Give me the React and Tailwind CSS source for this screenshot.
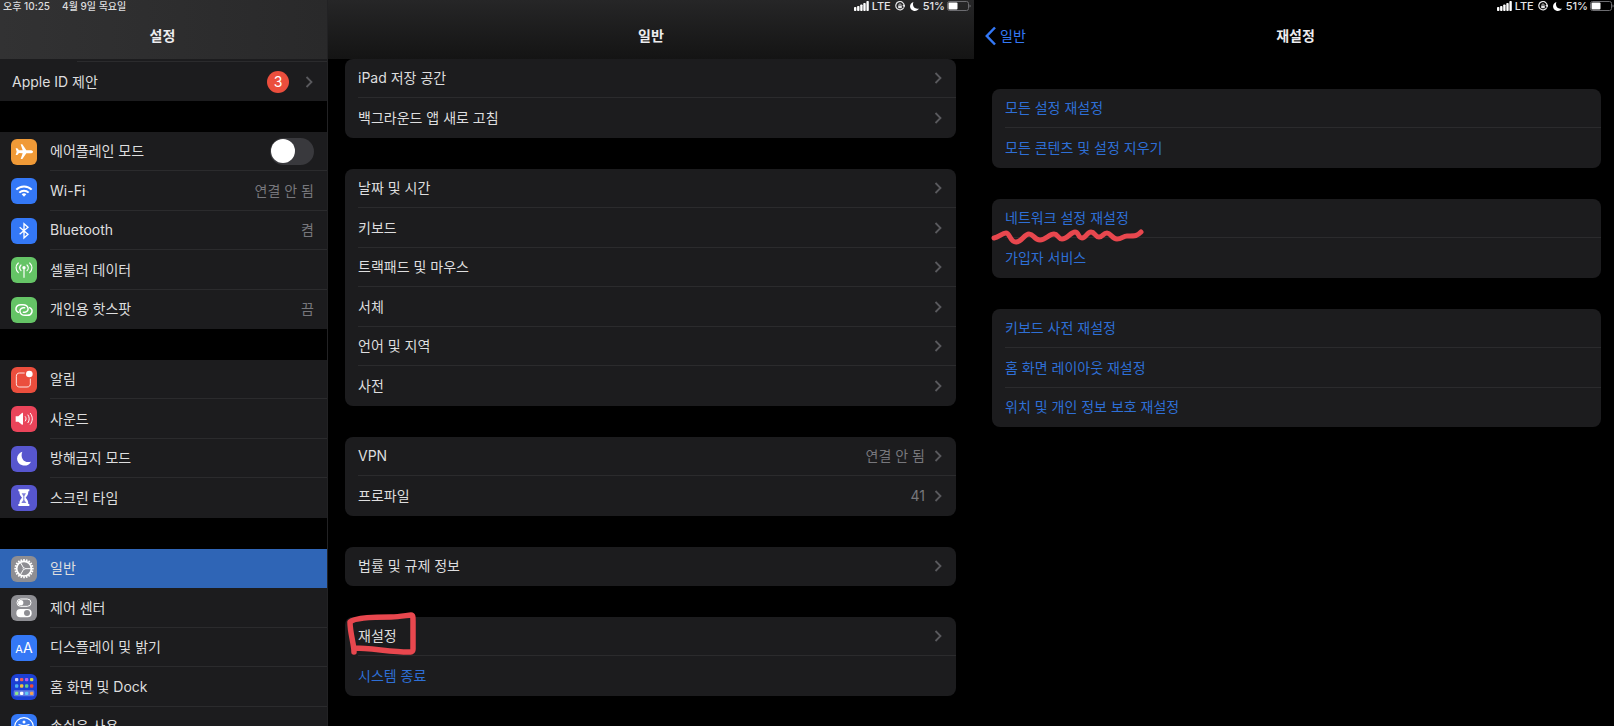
import { useState } from 'react';
import clsx from 'clsx';

const networkRows = [
    { icon: 'airplane', color: 'bg-[#f09a37]', label: '에어플레인 모드', toggle: true },
    { icon: 'wifi', color: 'bg-[#3478f6]', label: 'Wi-Fi', value: '연결 안 됨' },
    { icon: 'bluetooth', color: 'bg-[#3478f6]', label: 'Bluetooth', value: '켬' },
    { icon: 'cellular', color: 'bg-[#65c466]', label: '셀룰러 데이터' },
    { icon: 'hotspot', color: 'bg-[#65c466]', label: '개인용 핫스팟', value: '끔' },
];

const alertRows = [
    { icon: 'notifications', color: 'bg-[#eb4e3d]', label: '알림' },
    { icon: 'sound', color: 'bg-[#ea445a]', label: '사운드' },
    { icon: 'moon', color: 'bg-[#5756ce]', label: '방해금지 모드' },
    { icon: 'hourglass', color: 'bg-[#5756ce]', label: '스크린 타임' },
];

const deviceRows = [
    { icon: 'gear', color: 'bg-[#8e8e93]', label: '일반', active: true },
    { icon: 'controls', color: 'bg-[#8e8e93]', label: '제어 센터' },
    { icon: 'text', color: 'bg-[#3478f6]', label: '디스플레이 및 밝기' },
    { icon: 'home', color: 'bg-[#1c40d4]', label: '홈 화면 및 Dock' },
    { icon: 'accessibility', color: 'bg-[#3478f6]', label: '손쉬운 사용' },
];

const generalGroups = [
    [{ label: 'iPad 저장 공간' }, { label: '백그라운드 앱 새로 고침' }],
    [
        { label: '날짜 및 시간' },
        { label: '키보드' },
        { label: '트랙패드 및 마우스' },
        { label: '서체' },
        { label: '언어 및 지역' },
        { label: '사전' },
    ],
    [{ label: 'VPN', value: '연결 안 됨' }, { label: '프로파일', value: '41' }],
    [{ label: '법률 및 규제 정보' }],
    [{ label: '재설정', mark: 'box' }, { label: '시스템 종료', action: true }],
];

const resetGroups = [
    [{ label: '모든 설정 재설정', action: true }, { label: '모든 콘텐츠 및 설정 지우기', action: true }],
    [{ label: '네트워크 설정 재설정', action: true, mark: 'wave' }, { label: '가입자 서비스', action: true }],
    [
        { label: '키보드 사전 재설정', action: true },
        { label: '홈 화면 레이아웃 재설정', action: true },
        { label: '위치 및 개인 정보 보호 재설정', action: true },
    ],
];

const gearTeeth = Array.from({ length: 20 }, (_, i) => i * 18);

const homeDots = [
    ['#cfcff0', '#f25c54', '#b45cf0', '#d4d84a'],
    ['#4fb0f0', '#f0c040', '#5fd08a', '#f04a3a'],
    ['#8de88a', '#ffffff', '#5fc8f5', '#f0a050'],
];

const glyphs = {
    airplane: (
        <path
            fill="#fff"
            d="M66 38c0-3-4-4.500-8-4.500H46L34 16h-5l6 17.500-11 .5-5-6h-5l3 10-3 10h5l5-6 11 .5L29 60h5l12-17.500h12c4 0 8-1.500 8-4.500z"
        />
    ),
    wifi: (
        <g fill="none" stroke="#fff" strokeWidth="6">
            <path d="M16 35c12-13 34-13 46 0" />
            <path d="M25 44c8-8 20-8 28 0" />
            <path d="M32 49c4-4 10-4 14 0l-7 7z" fill="#fff" stroke="none" />
        </g>
    ),
    bluetooth: <path fill="none" stroke="#fff" strokeWidth="4" d="M26 28l25 21-12 11V17l12 11-25 21" />,
    cellular: (
        <g fill="none" stroke="#fff" strokeWidth="3.500" strokeLinecap="round">
            <circle cx="39" cy="32" r="5" fill="#fff" stroke="none" />
            <path d="M39 34v27M30 24c-5 5-5 12 0 17M48 24c5 5 5 12 0 17M22 18c-9 8-9 21 0 29M56 18c9 8 9 21 0 29" />
        </g>
    ),
    hotspot: (
        <g fill="none" stroke="#fff" strokeWidth="4.500" strokeLinecap="round">
            <path d="M22 46C10 40 14 23 29 23h7c17 0 21 20 6 23h-5" />
            <path d="M56 32c12 6 8 23-7 23h-7c-17 0-21-20-6-23h5" />
        </g>
    ),
    notifications: (
        <g>
            <path
                fill="none"
                stroke="#fff"
                strokeOpacity=".85"
                strokeWidth="3"
                d="M41 18H26c-7 0-10 4-10 10v22c0 7 4 10 10 10h22c7 0 10-4 10-10V35"
            />
            <circle cx="55" cy="21" r="10" fill="#fff" />
        </g>
    ),
    sound: (
        <g fill="none" stroke="#fff" strokeWidth="3" strokeLinecap="round">
            <path d="M14 31h8l11-10c2-1 3 0 3 2v31c0 2-1 3-3 2L22 47h-8z" fill="#fff" stroke="none" />
            <path d="M43 32c3 4 3 9 0 13M51 27c5 7 5 16 0 23M58 22c8 10 8 23 0 33" />
        </g>
    ),
    moon: <path fill="#fff" d="M34 17c-20 6-22 34 0 41 11 3 21-2 26-11-19 6-34-10-26-30z" />,
    hourglass: (
        <g>
            <path
                fill="#fff"
                d="M22 13h33v6h-3c0 9-3 14-8 19 5 5 8 10 8 19h3v6H22v-6h3c0-9 3-14 8-19-5-5-8-10-8-19h-3z"
            />
            <path fill="#5756ce" d="M32 25h13l-5 9v11l6 9H31l6-9V34z" opacity=".75" />
        </g>
    ),
    gear: (
        <g stroke="#fff" fill="none">
            {gearTeeth.map((angle) => (
                <path key={angle} d="M39 9v6" strokeWidth="5" transform={`rotate(${angle} 39 38)`} />
            ))}
            <circle cx="39" cy="38" r="22" strokeWidth="5" />
            <path d="M39 38h22M39 38L28 19M39 38L28 57" strokeWidth="3" />
            <circle cx="39" cy="38" r="3" fill="#8e8e93" strokeWidth="2" />
        </g>
    ),
    controls: (
        <g>
            <rect x="18" y="12" width="42" height="22" rx="11" fill="none" stroke="#fff" strokeWidth="3" />
            <circle cx="29" cy="23" r="8" fill="#fff" />
            <rect x="16" y="42" width="46" height="25" rx="12" fill="#fff" />
            <circle cx="48" cy="54" r="9" fill="#8e8e93" />
        </g>
    ),
    home: (
        <g>
            <rect x="8" y="49" width="62" height="18" rx="4" fill="#fff" opacity=".3" />
            {homeDots.map((row, y) =>
                row.map((fill, x) => (
                    <rect key={`${x}-${y}`} x={12 + x * 15} y={[12, 31, 53][y]} width="10" height="10" rx="3" fill={fill} />
                ))
            )}
        </g>
    ),
    accessibility: (
        <g stroke="#fff" fill="none" strokeWidth="3.500" strokeLinecap="round">
            <circle cx="39" cy="39" r="28" />
            <circle cx="39" cy="24" r="4.500" fill="#fff" stroke="none" />
            <path d="M24 32l11 3h8l11-3M36 35v10l-5 14M42 35v10l5 14M37 36h4v9h-4z" strokeWidth="4" />
        </g>
    ),
};

const TileIcon = ({ icon, color }) => (
    <span className={clsx('flex size-[26px] shrink-0 items-center justify-center rounded-md text-white', color)}>
        {icon === 'text' ? (
            <span className="flex items-baseline leading-none">
                <span className="text-[11px]">A</span>
                <span className="text-[14px]">A</span>
            </span>
        ) : (
            <svg viewBox="0 0 78 78" className="size-full">
                {glyphs[icon]}
            </svg>
        )}
    </span>
);

const Chevron = () => (
    <svg viewBox="0 0 8 12" className="h-3 w-2 shrink-0" fill="none" stroke="#5a5a5e" strokeWidth="1.800">
        <path d="M1.500 1l5 5-5 5" />
    </svg>
);

const BoxMark = () => (
    <svg viewBox="0 0 76 48" className="pointer-events-none absolute -top-1.5 -left-0.5 h-12 w-[76px]">
        <path
            fill="none"
            stroke="#e8474e"
            strokeWidth="5.500"
            strokeLinecap="round"
            strokeLinejoin="round"
            d="M11 41c0-8-4-19-4-30 5-5 27-5 41-5 9 0 17-2 20-2 2 0 2 2 2 6v28c0 3-2 3-5 3-15 0-39-4-53-4"
        />
    </svg>
);

const WaveMark = () => (
    <svg viewBox="0 0 156 20" className="pointer-events-none absolute top-[29px] -left-0.5 z-10 h-5 w-[156px]">
        <path
            fill="none"
            stroke="#e8474e"
            strokeWidth="5"
            strokeLinecap="round"
            strokeLinejoin="round"
            d="M4 10C9 9 12 5 16 5C20 5 20 14 26 14C32 14 34 6 39 6C44 6 44 12 50 12C56 12 59 6 64 6C68 6 68 11 72 11C77 11 81 4 85 4C89 4 88 10 92 10C96 10 97 4 101 4C105 4 105 9 109 9C113 9 113 5 117 5C121 5 122 11 127 11C132 11 133 8 137 8C146 8 147 8 151 4"
        />
    </svg>
);

const StatusIcons = () => (
    <div className="flex h-3 items-center justify-end text-[11px] leading-3 font-medium text-[#e4e4e6]">
        <svg viewBox="0 0 15 10" className="h-2.5 w-[15px]" fill="#fff">
            <rect y="6" width="2.400" height="4" rx=".8" />
            <rect x="3.100" y="5" width="2.400" height="5" rx=".8" />
            <rect x="6.200" y="3.500" width="2.400" height="6.500" rx=".8" />
            <rect x="9.300" y="2" width="2.400" height="8" rx=".8" />
            <rect x="12.400" y="0" width="2.400" height="10" rx=".8" />
        </svg>
        <span className="ml-[3px]">LTE</span>
        <svg viewBox="0 0 10 10" className="ml-1 size-2.5" fill="none" stroke="#e4e4e6" strokeWidth="1.200">
            <path d="M8.800 6.500A4.200 4.200 0 1 1 9.200 4.500M7.800 4.200l1.400 1.300 .8-1.700" />
            <path d="M4 5V3.800a1 1 0 0 1 2 0V5" strokeWidth=".8" />
            <rect x="3.200" y="4.800" width="3.600" height="2.400" fill="#e4e4e6" stroke="none" />
        </svg>
        <svg viewBox="18 17 42 42" className="ml-[5px] size-[9px]">
            {glyphs.moon}
        </svg>
        <span className="ml-1">51%</span>
        <svg viewBox="0 0 24 10" className="ml-0.5 h-2.5 w-6">
            <rect x=".5" y=".5" width="21" height="9" rx="2" fill="none" stroke="#6c6c70" />
            <rect x="1.500" y="1.500" width="9" height="7" rx="1" fill="#fff" />
            <path d="M22.500 3.500v3c1.500-.5 1.500-2.500 0-3z" fill="#6c6c70" />
        </svg>
    </div>
);

const Title = ({ children }) => (
    <h1 className="text-center text-[14px] leading-5 font-semibold text-[#ececee]">{children}</h1>
);

const SidebarRow = ({ row, checked, onToggle }) => {
    const content = (
        <>
            <TileIcon icon={row.icon} color={row.color} />
            <span
                className={clsx(
                    'flex h-full flex-1 items-center justify-between border-b pr-[13px] group-last:border-transparent',
                    row.active ? 'border-transparent' : 'border-[#2b2b2d]'
                )}
            >
                <span>{row.label}</span>
                {row.value && <span className="text-[#77777c]">{row.value}</span>}
                {row.toggle && (
                    <span className="flex h-[27px] w-11 items-center rounded-full bg-[#39393d] p-px has-checked:bg-[#65c466]">
                        <input
                            type="checkbox"
                            role="switch"
                            checked={checked}
                            onChange={onToggle}
                            className="size-6 appearance-none rounded-full bg-white checked:ml-auto"
                        />
                    </span>
                )}
            </span>
        </>
    );
    const rowClass = 'flex h-full w-full items-center gap-[13px] pl-[11px] text-left';

    return (
        <li className={clsx('group odd:h-[39px] even:h-10', row.active ? 'bg-[#2f65b6]' : 'bg-[#1c1c1e]')}>
            {row.toggle ? (
                <label className={rowClass}>{content}</label>
            ) : (
                <button type="button" className={rowClass}>
                    {content}
                </button>
            )}
        </li>
    );
};

const SettingsCard = ({ rows }) => (
    <ul className="rounded-lg bg-[#1c1c1e]">
        {rows.map((row) => (
            <li key={row.label} className="group relative pl-[13px] odd:h-[39px] even:h-10">
                <button
                    type="button"
                    className={clsx(
                        'flex h-full w-full items-center border-b border-[#2b2b2d] pr-3.5 text-left group-last:border-transparent',
                        row.action && 'text-[#2e6fd6]'
                    )}
                >
                    <span className="flex-1">{row.label}</span>
                    {row.value && <span className="mr-[9px] text-[#77777c]">{row.value}</span>}
                    {!row.action && <Chevron />}
                </button>
                {row.mark === 'box' && <BoxMark />}
                {row.mark === 'wave' && <WaveMark />}
            </li>
        ))}
    </ul>
);

const Sidebar = () => {
    const [airplane, setAirplane] = useState(false);

    return (
        <nav className="overflow-hidden border-r border-[#222224]">
            <header className="h-[59px] bg-linear-to-r from-[#323233] to-[#29292a]">
                <div className="flex h-3 gap-3 pl-[3px] text-[10px] leading-3 font-medium text-[#dcdcde]">
                    <span>오후 10:25</span>
                    <span>4월 9일 목요일</span>
                </div>
                <div className="pt-3.5 pr-0.5">
                    <Title>설정</Title>
                </div>
            </header>
            <div className="flex flex-col gap-[31px]">
                <div className="h-[42px] bg-[#1c1c1e] pt-0.5">
                    <div className="ml-[77px] h-px bg-[#2b2b2d]" />
                    <button type="button" className="flex h-[39px] w-full items-center pr-3.5 pl-3 text-left">
                        <span className="flex-1">Apple ID 제안</span>
                        <span className="mr-4 flex size-[22px] items-center justify-center rounded-full bg-[#eb4e3d] text-white">
                            3
                        </span>
                        <Chevron />
                    </button>
                </div>
                {[networkRows, alertRows, deviceRows].map((rows) => (
                    <ul key={rows[0].label}>
                        {rows.map((row) => (
                            <SidebarRow
                                key={row.label}
                                row={row}
                                checked={airplane}
                                onToggle={() => setAirplane(!airplane)}
                            />
                        ))}
                    </ul>
                ))}
            </div>
        </nav>
    );
};

const App = () => (
    <div className="grid h-screen grid-cols-[328fr_646fr_640fr] overflow-hidden bg-black font-[Inter,'Noto_Sans_CJK_KR',sans-serif] text-[14px] leading-5 text-[#dededf]">
        <Sidebar />
        <main className="min-w-0">
            <header className="h-[59px] bg-linear-to-b from-[#262627] to-[#141414]">
                <div className="pr-[3px]">
                    <StatusIcons />
                </div>
                <div className="pt-3.5">
                    <Title>일반</Title>
                </div>
            </header>
            <div className="flex flex-col gap-[31px] pr-[18px] pl-[17px]">
                {generalGroups.map((rows) => (
                    <SettingsCard key={rows[0].label} rows={rows} />
                ))}
            </div>
        </main>
        <section className="min-w-0">
            <header className="h-[59px]">
                <StatusIcons />
                <div className="grid grid-cols-3 items-center pt-3.5 pr-2 pl-[11px]">
                    <a href="#general" className="flex items-center gap-1 text-[#3478f6]">
                        <svg viewBox="0 0 11 20" className="h-5 w-[11px]" fill="none" stroke="#3478f6" strokeWidth="2.500">
                            <path d="M10 1.500L1.800 10l8.200 8.500" />
                        </svg>
                        일반
                    </a>
                    <Title>재설정</Title>
                </div>
            </header>
            <div className="flex flex-col gap-[31px] pt-[30px] pr-[13px] pl-[18px]">
                {resetGroups.map((rows) => (
                    <SettingsCard key={rows[0].label} rows={rows} />
                ))}
            </div>
        </section>
    </div>
);

export default App;
